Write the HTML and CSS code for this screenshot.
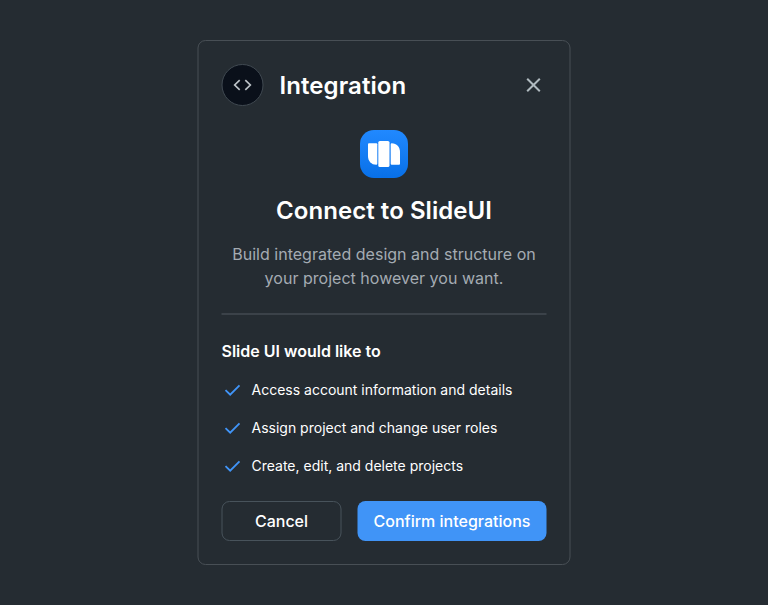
FILE: index.html
```html
<!DOCTYPE html>
<html lang="en">
<head>
<meta charset="utf-8">
<title>Integration</title>
<link rel="stylesheet" href="styles.css">
</head>
<body>
<main class="dialog">
  <header class="header">
    <span class="badge">
      <svg width="20" height="20" viewBox="0 0 20 20" fill="none" stroke="currentColor" stroke-width="1.7"><path d="M7.2 5.2 2.2 10l5 4.8M12.8 5.2l5 4.8-5 4.8"/></svg>
    </span>
    <h1 class="title">Integration</h1>
    <button class="close" aria-label="Close">
      <svg width="16" height="16" viewBox="0 0 16 16" fill="none" stroke="currentColor" stroke-width="2"><path d="M1.7 1.7l12.6 12.6M14.3 1.7 1.7 14.3"/></svg>
    </button>
  </header>
  <section class="intro">
    <svg class="logo" width="48" height="48" viewBox="0 0 48 48">
      <defs><linearGradient id="blue" x1="0" y1="0" x2="0" y2="1"><stop offset="0" stop-color="#2189ff"/><stop offset="1" stop-color="#0870e8"/></linearGradient></defs>
      <rect width="48" height="48" rx="14" fill="url(#blue)"/>
      <g fill="#fff">
        <path d="M9 13.2h7.3q1 0 1 1v19.6q0 1-1 1C11.3 34.8 8 31 8 26V14.2q0-1 1-1z"/>
        <rect x="18.3" y="11" width="11.2" height="26" rx="1.6"/>
        <path d="M39 34.8h-7.3q-1 0-1-1V14.2q0-1 1-1C36.7 13.2 40 17 40 22v11.8q0 1-1 1z"/>
      </g>
    </svg>
    <h2 class="heading">Connect to SlideUI</h2>
    <p class="description">Build integrated design and structure on<br>your project however you want.</p>
  </section>
  <section class="permissions">
    <h3 class="subheading">Slide UI would like to</h3>
    <ul class="list">
      <li><svg class="check" viewBox="0 0 16 12"><path d="M1 6.1 5.7 10.6 15 1.3"/></svg><span>Access account information and details</span></li>
      <li><svg class="check" viewBox="0 0 16 12"><path d="M1 6.1 5.7 10.6 15 1.3"/></svg><span>Assign project and change user roles</span></li>
      <li><svg class="check" viewBox="0 0 16 12"><path d="M1 6.1 5.7 10.6 15 1.3"/></svg><span>Create, edit, and delete projects</span></li>
    </ul>
  </section>
  <footer class="actions">
    <button class="button cancel">Cancel</button>
    <button class="button confirm">Confirm integrations</button>
  </footer>
</main>
</body>
</html>
```
FILE: styles.css
```css
* { box-sizing: border-box; }
body {
  margin: 0;
  height: 605px;
  padding: 40px 0 0 198px;
  background: #252c32;
  color: #fff;
  font-family: Inter, sans-serif;
}
h1, h2, h3, p, ul { margin: 0; padding: 0; }
button { font: inherit; color: inherit; background: none; border: 0; padding: 0; }
svg { display: block; flex: none; }
.dialog {
  width: 373px;
  height: 525px;
  padding: 23px;
  border: 1px solid #484f55;
  border-radius: 8px;
  transform: translateX(-0.5px);
}
.header { display: flex; align-items: center; height: 42px; }
.badge {
  display: grid;
  place-items: center;
  width: 42px;
  height: 42px;
  border: 1px solid #404951;
  border-radius: 50%;
  background: #0a101a;
  color: #bcc2c7;
}
.title { margin: 2px 0 0 16px; font-size: 24px; line-height: 32px; font-weight: 600; letter-spacing: 0.08px; }
.close { margin-left: auto; margin-right: 5px; color: #b0babf; }
.intro {
  display: flex;
  flex-direction: column;
  align-items: center;
  height: 209px;
  padding-top: 24px;
  border-bottom: 2px solid #3b4249;
}
.logo { transform: translateX(-0.5px); }
.heading { margin-top: 17px; font-size: 24px; line-height: 32px; font-weight: 600; letter-spacing: 0.06px; white-space: nowrap; }
.description { margin-top: 15px; font-size: 16px; line-height: 24px; letter-spacing: 0.02px; color: #a4abb2; text-align: center; white-space: nowrap; }
.subheading { margin-top: 24px; font-size: 16px; line-height: 24px; font-weight: 600; }
.list { display: grid; gap: 14px; margin-top: 15px; list-style: none; }
.list li { display: flex; align-items: center; gap: 11px; height: 24px; padding-left: 3px; font-size: 14px; line-height: 24px; }
.check { width: 16px; height: 12px; fill: none; stroke: #4094f7; stroke-width: 1.9; }
.actions { display: flex; gap: 16px; margin-top: 23px; }
.button { height: 40px; border-radius: 8px; font-size: 16px; line-height: 24px; font-weight: 500; white-space: nowrap; }
.cancel { width: 120px; border: 1px solid #48535b; }
.confirm { width: 189px; background: #4094f7; }
```
